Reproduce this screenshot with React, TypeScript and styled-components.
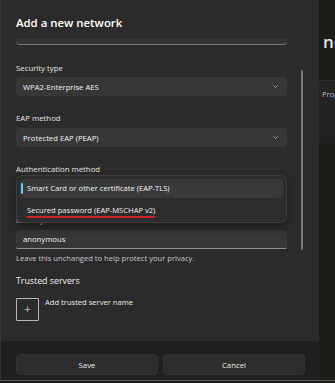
import React from "react";
import styled, { createGlobalStyle } from "styled-components";

const GlobalStyle = createGlobalStyle`
  html, body {
    margin: 0;
    padding: 0;
    background: #1b1b18;
  }
  body {
    font-family: "Open Sans", "Noto Sans", sans-serif;
    -webkit-font-smoothing: antialiased;
  }
`;

const Screen = styled.div`
  width: 335px;
  height: 380px;
  display: flex;
  border-bottom: 1px solid #5e5e5e;
  overflow: hidden;
`;

const Dialog = styled.div`
  width: 319px;
  flex-shrink: 0;
  display: flex;
  flex-direction: column;
  background: #2b2b2b;
  border-left: 1px solid #353535;
  box-sizing: border-box;
`;

const Header = styled.div`
  height: 38px;
  flex-shrink: 0;
  display: flex;
  align-items: center;
  padding-left: 15px;
  padding-top: 6px;
  box-sizing: border-box;
`;

const Title = styled.h1`
  margin: 0;
  font-size: 11.4px;
  font-weight: 600;
  color: #ffffff;
`;

const Body = styled.div`
  flex: 1;
  position: relative;
  overflow: hidden;
  padding: 0 32px 0 15px;
`;

const ClippedField = styled.div`
  height: 5px;
  margin-top: 1px;
  background: #333333;
  border-bottom: 1.5px solid #767676;
  border-radius: 0 0 4px 4px;
`;

const Field = styled.div<{ $top?: number }>`
  display: flex;
  flex-direction: column;
  gap: ${({ $top }) => ($top ? 3 : 4)}px;
  margin-top: ${({ $top }) => $top ?? 16}px;
  position: relative;
`;

const Label = styled.div`
  font-size: 7.8px;
  line-height: 12px;
  color: #e6e6e6;
`;

const Select = styled.div`
  height: 19px;
  display: flex;
  align-items: center;
  justify-content: space-between;
  padding: 0 9px 0 7px;
  background: #373737;
  border-radius: 4px;
  font-size: 7.7px;
  color: #f2f2f2;
`;

const Chevron = () => (
  <svg width="5" height="3" viewBox="0 0 5 3">
    <path d="M0.4 0.4 L2.5 2.5 L4.6 0.4" fill="none" stroke="#bdbdbd" strokeWidth="0.8" />
  </svg>
);

const Popup = styled.div`
  position: absolute;
  left: 0;
  right: 0;
  top: 12px;
  height: 48px;
  box-sizing: border-box;
  padding: 3px;
  background: #2c2c2c;
  border: 1px solid #3c3c3c;
  border-radius: 6px;
  box-shadow: 0 4px 10px rgba(0, 0, 0, 0.35);
  display: flex;
  flex-direction: column;
  gap: 3px;
  z-index: 2;
`;

const Option = styled.div<{ $selected?: boolean; $marked?: boolean }>`
  position: relative;
  height: 19px;
  display: flex;
  align-items: center;
  padding-left: 7px;
  border-radius: 4px;
  background: ${({ $selected }) => ($selected ? "#393939" : "transparent")};
  font-size: 7.6px;
  color: #f4f4f4;
  text-decoration: ${({ $marked }) => ($marked ? "underline" : "none")};
  text-decoration-color: #c8242c;
  text-decoration-thickness: 1.5px;
  text-underline-offset: 3px;

  &::before {
    content: "";
    display: ${({ $selected }) => ($selected ? "block" : "none")};
    position: absolute;
    left: 1px;
    top: 4px;
    width: 2px;
    height: 11px;
    border-radius: 1px;
    background: #60cdff;
  }
`;

const Input = styled.div`
  height: 19px;
  display: flex;
  align-items: center;
  padding-left: 7px;
  background: #363636;
  border-radius: 4px 4px 2px 2px;
  border-bottom: 1px solid #8c8c8c;
  box-sizing: border-box;
  font-size: 7.7px;
  color: #f2f2f2;
`;

const Helper = styled.div`
  margin-top: 3px;
  font-size: 7.6px;
  line-height: 12px;
  color: #c8c8c8;
`;

const SectionTitle = styled.div`
  margin-top: 10px;
  font-size: 8.8px;
  line-height: 14px;
  color: #f2f2f2;
`;

const AddRow = styled.div`
  margin-top: 10px;
  display: flex;
  align-items: flex-start;
  gap: 6px;
`;

const PlusBox = styled.div`
  width: 23px;
  height: 23px;
  box-sizing: border-box;
  border: 1px solid #b8b8b8;
  border-radius: 1px;
  display: flex;
  align-items: center;
  justify-content: center;
  color: #e8e8e8;
  font-size: 12px;
  font-weight: 300;
`;

const AddText = styled.div`
  font-size: 7.6px;
  line-height: 10px;
  margin-top: -1px;
  color: #ececec;
`;

const Scrollbar = styled.div`
  position: absolute;
  left: 300px;
  top: 32px;
  width: 2px;
  height: 180px;
  border-radius: 1px;
  background: #7a7a7a;
`;

const Footer = styled.div`
  height: 39px;
  flex-shrink: 0;
  display: flex;
  align-items: flex-end;
  gap: 5px;
  padding: 0 14px 5px 15px;
  box-sizing: border-box;
  background: #202020;
`;

const Button = styled.div`
  flex: 1;
  height: 19px;
  display: flex;
  align-items: center;
  justify-content: center;
  background: #2d2d2d;
  border: 1px solid #333333;
  border-radius: 4px;
  font-size: 7.8px;
  color: #ececec;
`;

const Behind = styled.div`
  flex: 1;
  display: flex;
  flex-direction: column;
  background: #1c1c19;
  overflow: hidden;
`;

const BehindHeading = styled.div`
  margin-top: 32px;
  padding-left: 4px;
  font-size: 17px;
  font-weight: 600;
  line-height: 20px;
  color: #e4e4e4;
  white-space: nowrap;
`;

const BehindRow = styled.div`
  margin-top: 28px;
  height: 25px;
  display: flex;
  align-items: center;
  padding-left: 3px;
  background: #232321;
  border-top: 1px solid #2e2e2c;
  font-size: 7.5px;
  color: #bdbdbd;
  white-space: nowrap;
`;

const BehindPanel = styled.div`
  height: 37px;
  background: #21211f;
`;

export default function App() {
  return (
    <>
      <GlobalStyle />
      <Screen>
        <Dialog>
          <Header>
            <Title>Add a new network</Title>
          </Header>
          <Body>
            <ClippedField />
            <Field $top={17}>
              <Label>Security type</Label>
              <Select>
                WPA2-Enterprise AES
                <Chevron />
              </Select>
            </Field>
            <Field>
              <Label>EAP method</Label>
              <Select>
                Protected EAP (PEAP)
                <Chevron />
              </Select>
            </Field>
            <Field>
              <Label>Authentication method</Label>
              <Select>
                Smart Card or other certificate (EAP-TLS)
                <Chevron />
              </Select>
              <Popup>
                <Option $selected>Smart Card or other certificate (EAP-TLS)</Option>
                <Option $marked>Secured password (EAP-MSCHAP v2)</Option>
              </Popup>
            </Field>
            <Field>
              <Label>Identity</Label>
              <Input>anonymous</Input>
            </Field>
            <Helper>Leave this unchanged to help protect your privacy.</Helper>
            <SectionTitle>Trusted servers</SectionTitle>
            <AddRow>
              <PlusBox>+</PlusBox>
              <AddText>Add trusted server name</AddText>
            </AddRow>
            <Scrollbar />
          </Body>
          <Footer>
            <Button>Save</Button>
            <Button>Cancel</Button>
          </Footer>
        </Dialog>
        <Behind>
          <BehindHeading>network</BehindHeading>
          <BehindRow>Properties</BehindRow>
          <BehindPanel />
        </Behind>
      </Screen>
    </>
  );
}
